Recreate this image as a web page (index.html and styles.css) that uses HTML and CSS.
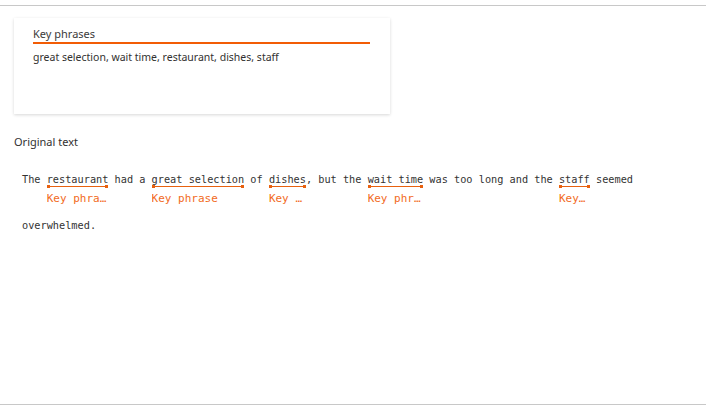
FILE: index.html
```html
<!DOCTYPE html>
<html>
<head>
<meta charset="utf-8">
<link rel="stylesheet" href="styles.css">
</head>
<body>
<div class="frame">
  <div class="card">
    <div class="card-title">Key phrases</div>
    <div class="card-body">great selection, wait time, restaurant, dishes, staff</div>
  </div>
  <div class="section-label">Original text</div>
  <div class="text">The <span class="phrase"><span class="word">restaurant</span><span class="bar"></span><span class="label">Key phrase</span></span> had a <span class="phrase"><span class="word">great selection</span><span class="bar"></span><span class="label">Key phrase</span></span> of <span class="phrase"><span class="word">dishes</span><span class="bar"></span><span class="label">Key phrase</span></span>, but the <span class="phrase"><span class="word">wait time</span><span class="bar"></span><span class="label">Key phrase</span></span> was too long and the <span class="phrase"><span class="word">staff</span><span class="bar"></span><span class="label">Key phrase</span></span> seemed overwhelmed.</div>
</div>
</body>
</html>
```
FILE: styles.css
```css
html, body {
  margin: 0;
  padding: 0;
  background: #ffffff;
}
.frame {
  margin-top: 5px;
  border-top: 1px solid #c8c8c8;
  border-bottom: 1px solid #c8c8c8;
  padding: 12px 14px 0 14px;
  height: 386px;
  font-family: "Noto Sans", sans-serif;
  color: #323130;
}
.card {
  width: 376px;
  height: 96px;
  box-sizing: border-box;
  padding: 8px 20px 0 19px;
  background: #fff;
  box-shadow: 0 1px 3px rgba(0, 0, 0, 0.16);
}
.card-title {
  font-size: 11px;
  line-height: 16px;
  border-bottom: 2px solid #f25c05;
  color: #3b3a39;
}
.card-body {
  margin-top: 5px;
  font-size: 10.5px;
  line-height: 16px;
  color: #323130;
}
.section-label {
  margin-top: 20px;
  font-size: 11px;
  line-height: 16px;
}
.text {
  margin-top: 22px;
  padding-left: 8px;
  width: 640px;
  font-family: "DejaVu Sans Mono", monospace;
  font-size: 10.25px;
  line-height: 14px;
  color: #333;
}
.phrase {
  display: inline-flex;
  flex-direction: column;
  margin-bottom: 12px;
}
.word {
  line-height: 14px;
}
.bar {
  position: relative;
  height: 3px;
  margin-top: -1px;
}
.bar::before {
  content: "";
  position: absolute;
  left: 0;
  right: 0;
  top: 1px;
  height: 1px;
  background: #e8610f;
}
.bar::after {
  content: "";
  position: absolute;
  left: 0;
  right: 0;
  top: 0;
  height: 3px;
  background:
    linear-gradient(#e8610f, #e8610f) left top / 3px 3px no-repeat,
    linear-gradient(#e8610f, #e8610f) right top / 3px 3px no-repeat;
}
.label {
  width: 0;
  min-width: 100%;
  margin-top: 4px;
  font-size: 11px;
  line-height: 14px;
  color: #f26b1d;
  white-space: nowrap;
  overflow: hidden;
  text-overflow: ellipsis;
}
```
